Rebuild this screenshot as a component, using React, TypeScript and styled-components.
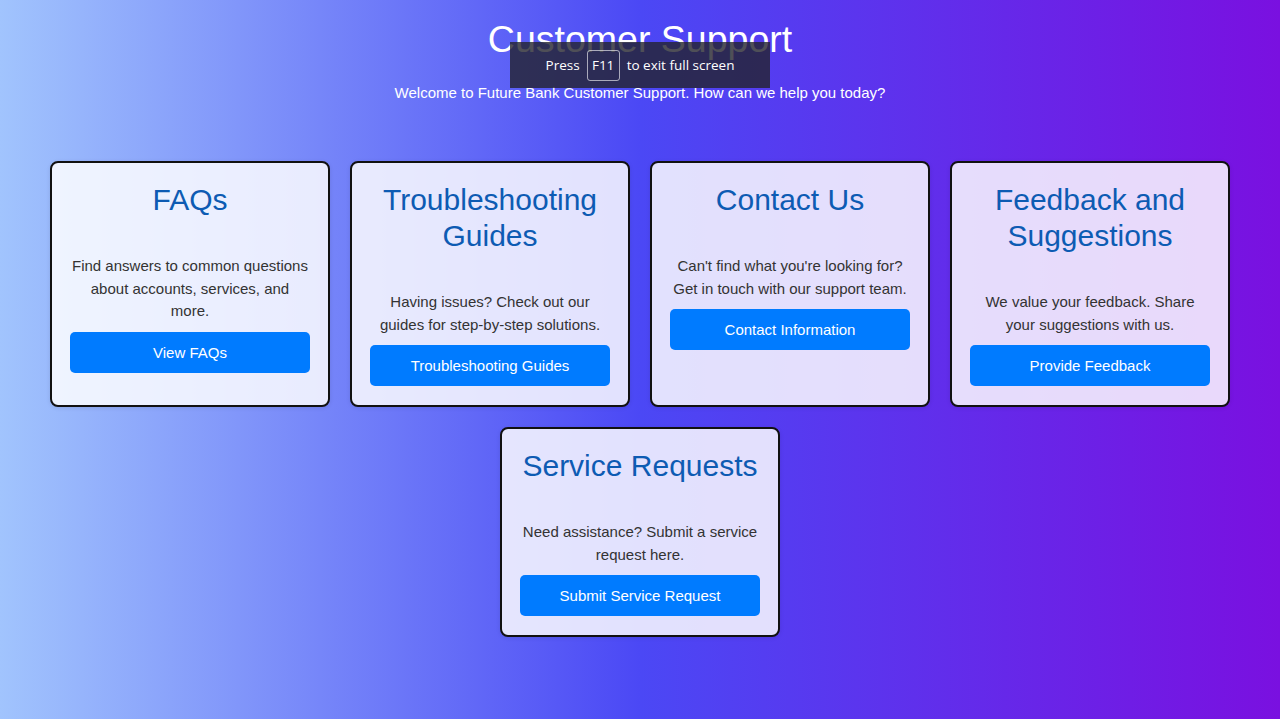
import React from "react";
import styled, { createGlobalStyle } from "styled-components";

const GlobalStyle = createGlobalStyle`
  html, body {
    margin: 0;
    padding: 0;
  }
  body {
    min-height: 719px;
    font-family: "Liberation Sans", Arial, sans-serif;
    font-size: 15px;
    background: linear-gradient(90deg, #a1c4fd 0%, #4b48f5 50%, #7a10e0 100%);
    background-attachment: fixed;
  }
  * { box-sizing: border-box; }
`;

const Page = styled.div`
  position: relative;
  min-height: 719px;
  padding-top: 18px;
`;

const Header = styled.header`
  text-align: center;
  color: #ffffff;
`;

const Title = styled.h1`
  margin: 0 0 23px;
  font-size: 37.5px;
  font-weight: normal;
  line-height: 43px;
`;

const Subtitle = styled.p`
  margin: 0;
  font-size: 15px;
  line-height: 17px;
`;

const CardGrid = styled.main`
  display: flex;
  flex-wrap: wrap;
  justify-content: center;
  gap: 20px;
  margin-top: 60px;
`;

const Card = styled.section`
  width: 280px;
  padding: 19px 18px 19px;
  border: 2px solid #111111;
  border-radius: 8px;
  background: rgba(255, 255, 255, 0.84);
  text-align: center;
  box-shadow: 0 1px 4px rgba(0, 0, 0, 0.1);
`;

const CardTitle = styled.h2`
  margin: 0 0 37px;
  font-size: 30px;
  font-weight: normal;
  line-height: 36px;
  color: #0d5bb3;
`;

const CardText = styled.p`
  margin: 0 0 9px;
  font-size: 15px;
  line-height: 22.5px;
  color: #333333;
`;

const ActionButton = styled.button`
  display: block;
  width: 100%;
  padding: 12px 0;
  border: none;
  border-radius: 5px;
  background: #007bff;
  color: #ffffff;
  font-family: "Liberation Sans", Arial, sans-serif;
  font-size: 15px;
  line-height: 17px;
  cursor: pointer;
`;

const FullscreenToast = styled.div`
  position: absolute;
  top: 42px;
  left: 50%;
  transform: translateX(-50%);
  width: 260px;
  height: 46px;
  display: flex;
  align-items: center;
  justify-content: center;
  gap: 7px;
  background: rgba(35, 35, 45, 0.8);
  color: #ffffff;
  font-family: "Open Sans", "Noto Sans", sans-serif;
  font-size: 13.5px;
`;

const KeyCap = styled.span`
  display: inline-flex;
  align-items: center;
  justify-content: center;
  width: 33px;
  height: 31px;
  border: 1px solid rgba(255, 255, 255, 0.6);
  border-radius: 3px;
`;

const cards = [
  {
    title: "FAQs",
    text: "Find answers to common questions about accounts, services, and more.",
    button: "View FAQs",
  },
  {
    title: "Troubleshooting Guides",
    text: "Having issues? Check out our guides for step-by-step solutions.",
    button: "Troubleshooting Guides",
  },
  {
    title: "Contact Us",
    text: "Can't find what you're looking for? Get in touch with our support team.",
    button: "Contact Information",
  },
  {
    title: "Feedback and Suggestions",
    text: "We value your feedback. Share your suggestions with us.",
    button: "Provide Feedback",
  },
  {
    title: "Service Requests",
    text: "Need assistance? Submit a service request here.",
    button: "Submit Service Request",
  },
];

export default function App() {
  return (
    <>
      <GlobalStyle />
      <Page>
        <Header>
          <Title>Customer Support</Title>
          <Subtitle>
            Welcome to Future Bank Customer Support. How can we help you today?
          </Subtitle>
        </Header>
        <CardGrid>
          {cards.map((c) => (
            <Card key={c.title}>
              <CardTitle>{c.title}</CardTitle>
              <CardText>{c.text}</CardText>
              <ActionButton>{c.button}</ActionButton>
            </Card>
          ))}
        </CardGrid>
        <FullscreenToast>
          <span>Press</span>
          <KeyCap>F11</KeyCap>
          <span>to exit full screen</span>
        </FullscreenToast>
      </Page>
    </>
  );
}
